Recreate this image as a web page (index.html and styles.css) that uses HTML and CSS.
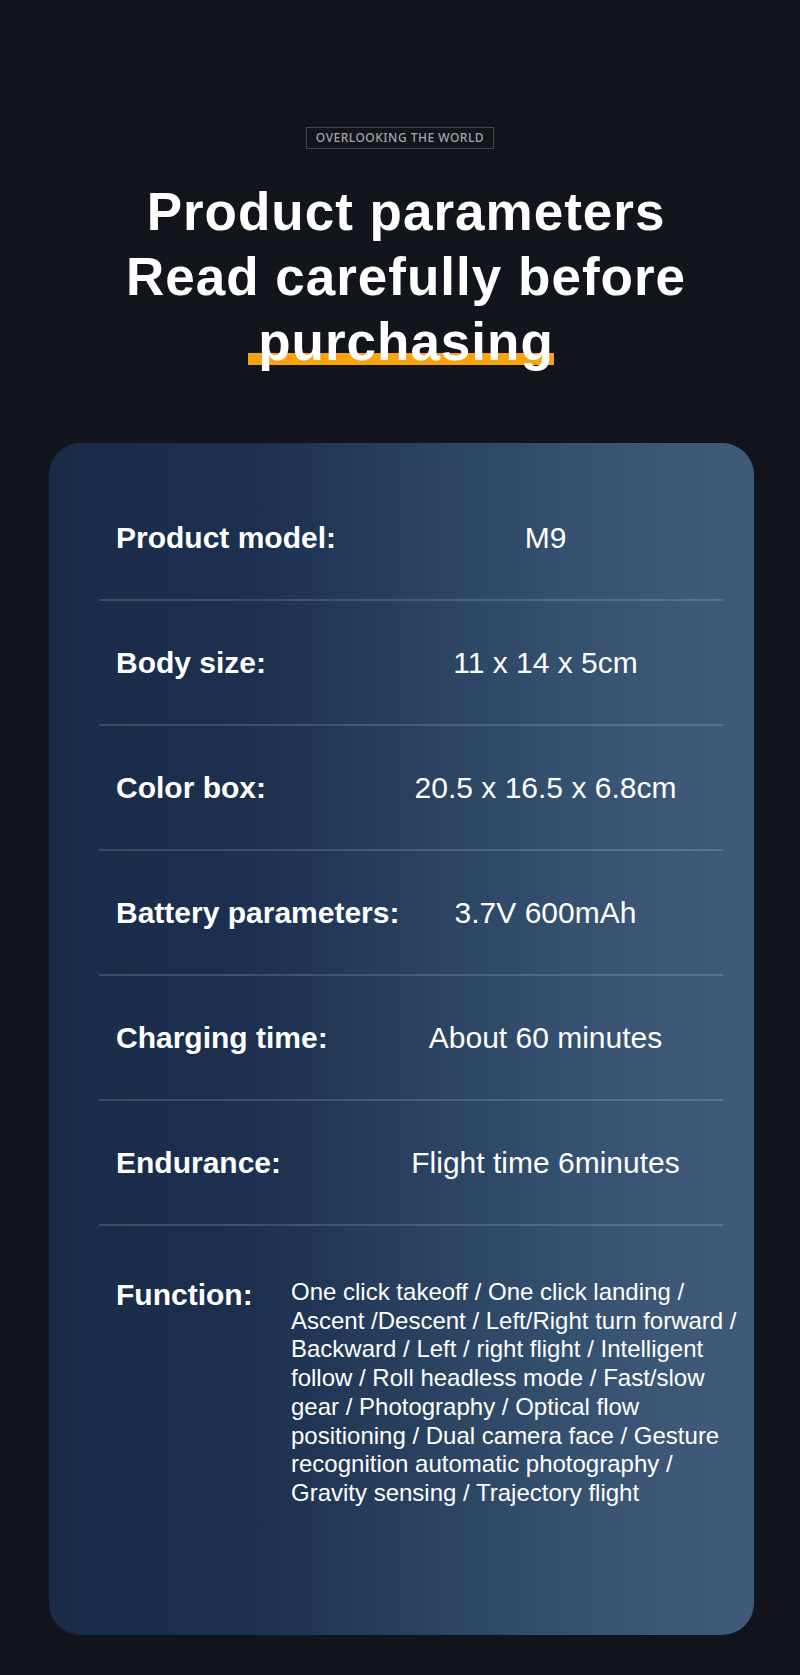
FILE: index.html
```html
<!DOCTYPE html>
<html>
<head>
    <title>Product parameters</title>
    <link rel="stylesheet" href="styles.css">
</head>
<body>
    <header class="intro">
        <span class="badge">OVERLOOKING THE WORLD</span>
        <h1 class="title">
            Product parameters<br>
            Read carefully before<br>
            <span class="mark">purchasing</span>
        </h1>
    </header>

    <section class="specs">
        <div class="row">
            <span class="label">Product model:</span>
            <span class="value">M9</span>
        </div>
        <div class="row">
            <span class="label">Body size:</span>
            <span class="value">11 x 14 x 5cm</span>
        </div>
        <div class="row">
            <span class="label">Color box:</span>
            <span class="value">20.5 x 16.5 x 6.8cm</span>
        </div>
        <div class="row">
            <span class="label">Battery parameters:</span>
            <span class="value">3.7V 600mAh</span>
        </div>
        <div class="row">
            <span class="label">Charging time:</span>
            <span class="value">About 60 minutes</span>
        </div>
        <div class="row">
            <span class="label">Endurance:</span>
            <span class="value">Flight time 6minutes</span>
        </div>
        <div class="row row-function">
            <span class="label">Function:</span>
            <p class="function-text">One click takeoff / One click landing / Ascent /Descent / Left/Right turn forward / Backward / Left / right flight / Intelligent follow / Roll headless mode / Fast/slow gear / Photography / Optical flow positioning / Dual camera face / Gesture recognition automatic photography / Gravity sensing / Trajectory flight</p>
        </div>
    </section>
</body>
</html>
```

FILE: styles.css
```css
body {
    margin: 0;
    background: #12151c;
    color: #fff;
    font-family: "Liberation Sans", Arial, sans-serif;
    min-height: 1675px;
}
.intro {
    padding-top: 127px;
    text-align: center;
}
.badge {
    display: inline-block;
    height: 22px;
    line-height: 20px;
    box-sizing: border-box;
    padding: 0 9px;
    border: 1px solid #43464d;
    color: #a2a4a8;
    font-family: "Noto Sans", sans-serif;
    font-size: 12px;
    font-weight: 500;
    letter-spacing: 0.5px;
}
.title {
    margin: 30px 0 0;
    padding-left: 12px;
    font-size: 53px;
    line-height: 65px;
    font-weight: 700;
    letter-spacing: 1px;
}
.mark {
    position: relative;
    z-index: 0;
}
.mark::before {
    content: "";
    position: absolute;
    left: -10px;
    right: 0;
    bottom: 6px;
    height: 12px;
    background: #f8a20c;
    z-index: -1;
}
.specs {
    margin: 69px 46px 0 49px;
    padding: 33px 31px 0 50px;
    height: 1192px;
    box-sizing: border-box;
    border-radius: 32px;
    background: linear-gradient(90deg, #1a2b48 0%, #1d3050 30%, #28415f 52%, #34506f 72%, #3d5876 88%, #3f5b79 100%);
}
.row {
    display: grid;
    grid-template-columns: 252px 1fr;
    align-items: center;
    height: 125px;
    box-sizing: border-box;
    padding-left: 17px;
    border-bottom: 2px solid rgba(255, 255, 255, 0.15);
}
.label {
    font-size: 30px;
    font-weight: 700;
    white-space: nowrap;
}
.value {
    font-size: 30px;
    text-align: center;
    white-space: nowrap;
}
.row-function {
    display: flex;
    align-items: flex-start;
    height: auto;
    padding-top: 52px;
    border-bottom: none;
}
.row-function .label {
    width: 175px;
    flex-shrink: 0;
    line-height: 34px;
}
.function-text {
    margin: 0;
    width: 450px;
    flex-shrink: 0;
    font-size: 24px;
    line-height: 28.7px;
}
```
